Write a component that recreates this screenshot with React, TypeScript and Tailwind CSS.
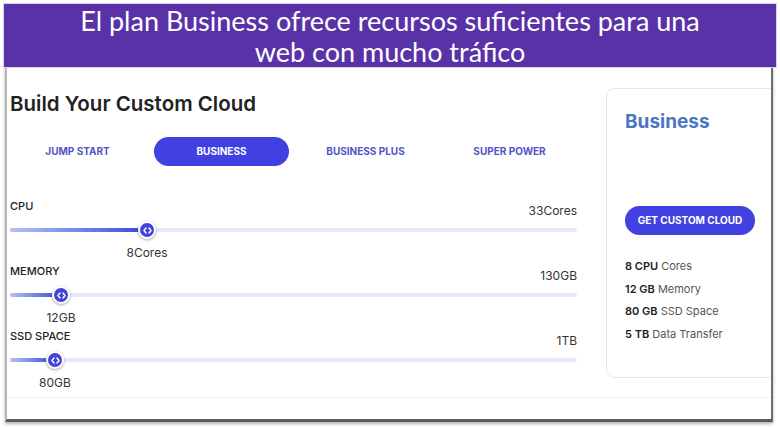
import { ReactNode } from "react"

const ui = { fontFamily: "Inter, 'Liberation Sans', sans-serif" }

function Thumb() {
  return (
    <div className="flex h-[18px] w-[18px] items-center justify-center rounded-full border-2 border-white bg-[#4343dc] shadow-[0_1px_3px_rgba(0,0,0,0.35)]">
      <svg width="9" height="7" viewBox="0 0 9 7" fill="none" stroke="white" strokeWidth="1.4" strokeLinecap="round" strokeLinejoin="round">
        <path d="M3 1 L1 3.5 L3 6" />
        <path d="M6 1 L8 3.5 L6 6" />
      </svg>
    </div>
  )
}

function SliderRow({ label, max, value, fillClass, thumbClass, valueClass }: { label: string; max: string; value: string; fillClass: string; thumbClass: string; valueClass: string }) {
  return (
    <div className="mb-[4px]">
      <div className="flex items-start justify-between">
        <span className="text-[11px] font-medium leading-[14px] text-[#222]">{label}</span>
        <span className="pt-[5px] text-[12px] leading-[14px] text-[#333]">{max}</span>
      </div>
      <div className="relative mt-[3px] h-[18px]">
        <div className="absolute left-0 right-0 top-[7px] h-[4px] rounded-full bg-[#e9e9fa]" />
        <div className={`absolute left-0 top-[7px] h-[4px] rounded-full bg-gradient-to-r from-[#b4c2f2] to-[#4040d8] ${fillClass}`} />
        <div className={`absolute top-0 ${thumbClass}`}>
          <Thumb />
        </div>
      </div>
      <div className="relative mt-[7px] h-[14px]">
        <span className={`absolute top-0 -translate-x-1/2 text-[12px] leading-[14px] text-[#333] ${valueClass}`}>{value}</span>
      </div>
    </div>
  )
}

function Spec({ strong, rest }: { strong: string; rest: ReactNode }) {
  return (
    <div className="text-[11px] leading-[14px] text-[#555]">
      <span className="font-semibold text-[#222]">{strong}</span> {rest}
    </div>
  )
}

export default function App() {
  const tabs = ["JUMP START", "BUSINESS", "BUSINESS PLUS", "SUPER POWER"]
  return (
    <div className="relative h-[427px] w-[780px] overflow-hidden bg-white" style={ui}>
      <div className="relative z-10 mx-[3px] mt-[3px] flex h-[65px] flex-col items-center justify-center border border-[#d9cff0] bg-[#5a32a8] text-center text-[27px] leading-[31px] text-white" style={{ fontFamily: "Lato, 'Open Sans', sans-serif" }}>
        <div>El plan Business ofrece recursos suficientes para una</div>
        <div>web con mucho tráfico</div>
      </div>

      <div className="-mt-[1px] ml-[5px] h-[355px] w-[768px] overflow-hidden border-b-[3px] border-l-2 border-r-2 border-b-[#5a5a5a] border-l-[#b5b5b5] border-r-[#6e6e6e] shadow-[0_2px_3px_rgba(0,0,0,0.3)]">
        <div className="flex h-[331px] border-b border-[#eeeeee] pl-[3px]">
          <div className="w-[568px]">
            <h1 className="mt-[25px] text-[20.5px] font-semibold leading-[24px] text-[#222]">Build Your Custom Cloud</h1>
            <div className="mt-[21px] flex gap-[9px]">
              {tabs.map((t) => (
                <div
                  key={t}
                  className={`flex h-[29px] w-[135px] items-center justify-center rounded-full text-[10px] font-bold ${t === "BUSINESS" ? "bg-[#4141e2] text-white" : "text-[#5353c8]"}`}
                >
                  {t}
                </div>
              ))}
            </div>
            <div className="mt-[33px]">
              <SliderRow label="CPU" max="33Cores" value="8Cores" fillClass="w-[137px]" thumbClass="left-[128px]" valueClass="left-[137px]" />
              <SliderRow label="MEMORY" max="130GB" value="12GB" fillClass="w-[51px]" thumbClass="left-[42px]" valueClass="left-[51px]" />
              <SliderRow label="SSD SPACE" max="1TB" value="80GB" fillClass="w-[45px]" thumbClass="left-[36px]" valueClass="left-[45px]" />
            </div>
          </div>
          <div className="ml-[29px] mt-[21px] h-[290px] w-[190px] shrink-0 rounded-[8px] border border-[#e6e6e6] pl-[18px]">
            <div className="mt-[21px] text-[19px] font-bold leading-[24px] text-[#4a76c2]">Business</div>
            <div className="mt-[72px] flex h-[29px] w-[130px] items-center justify-center rounded-full bg-[#4141e2] text-[10px] font-bold text-white">
              GET CUSTOM CLOUD
            </div>
            <div className="mt-[24px] flex flex-col gap-[8.5px]">
              <Spec strong="8 CPU" rest="Cores" />
              <Spec strong="12 GB" rest="Memory" />
              <Spec strong="80 GB" rest="SSD Space" />
              <Spec strong="5 TB" rest="Data Transfer" />
            </div>
          </div>
        </div>
      </div>
    </div>
  )
}
